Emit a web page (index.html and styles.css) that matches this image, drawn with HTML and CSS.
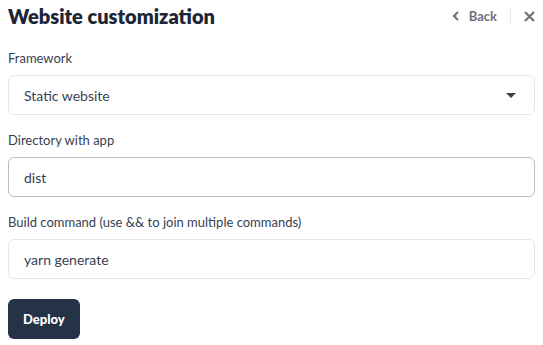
FILE: index.html
```html
<!DOCTYPE html>
<html lang="en">
<head>
    <meta charset="UTF-8">
    <title>Website customization</title>
    <link rel="stylesheet" href="styles.css">
</head>
<body>
    <div class="header">
        <h1>Website customization</h1>
        <div class="actions">
            <a class="back" href="#">
                <svg width="8" height="10" viewBox="0 0 8 10"><path d="M6 1L2 5l4 4" fill="none" stroke="currentColor" stroke-width="2.2"/></svg>
                Back
            </a>
            <span class="divider"></span>
            <a class="close" href="#">
                <svg width="11" height="11" viewBox="0 0 11 11"><path d="M1 1l9 9M10 1l-9 9" fill="none" stroke="currentColor" stroke-width="2.2"/></svg>
            </a>
        </div>
    </div>
    <form class="form">
        <div class="field">
            <label>Framework</label>
            <div class="select">
                <span>Static website</span>
                <span class="caret"></span>
            </div>
        </div>
        <div class="field">
            <label>Directory with app</label>
            <div class="input active">dist</div>
        </div>
        <div class="field">
            <label>Build command (use &amp;&amp; to join multiple commands)</label>
            <div class="input">yarn generate</div>
        </div>
        <button type="button" class="deploy">Deploy</button>
    </form>
</body>
</html>
```

FILE: styles.css
```css
body {
    margin: 0;
    padding: 0 8px;
    font-family: 'Lato', sans-serif;
    background: #ffffff;
    color: #1f2937;
}
.header {
    display: flex;
    justify-content: space-between;
    align-items: center;
    height: 32px;
}
.header h1 {
    margin: 0;
    font-size: 20px;
    font-weight: 800;
    color: #1d2636;
}
.actions {
    display: flex;
    align-items: center;
    gap: 13px;
    color: #6b7280;
}
.back {
    display: flex;
    align-items: center;
    gap: 9px;
    color: #6b7280;
    font-size: 13px;
    font-weight: 700;
    text-decoration: none;
}
.divider {
    width: 1px;
    height: 14px;
    background: #e5e7eb;
}
.close {
    display: flex;
    color: #6b7280;
}
.form {
    margin-top: 18px;
}
.field label {
    display: block;
    font-size: 13px;
    color: #374151;
    margin-bottom: 9px;
}
.field {
    margin-bottom: 17px;
}
.select, .input {
    box-sizing: border-box;
    height: 40px;
    border: 1px solid #e5e7eb;
    border-radius: 6px;
    padding: 0 15px;
    display: flex;
    align-items: center;
    font-size: 14px;
    color: #374151;
}
.input.active {
    border-color: #b8bcc4;
}
.select {
    justify-content: space-between;
}
.caret {
    width: 0;
    height: 0;
    border-left: 5px solid transparent;
    border-right: 5px solid transparent;
    border-top: 5px solid #374151;
    margin-right: 3px;
}
.deploy {
    margin-top: 3px;
    height: 40px;
    padding: 0 15px;
    background: #253347;
    color: #ffffff;
    border: none;
    border-radius: 6px;
    font-family: inherit;
    font-size: 13px;
    font-weight: 900;
}
```
